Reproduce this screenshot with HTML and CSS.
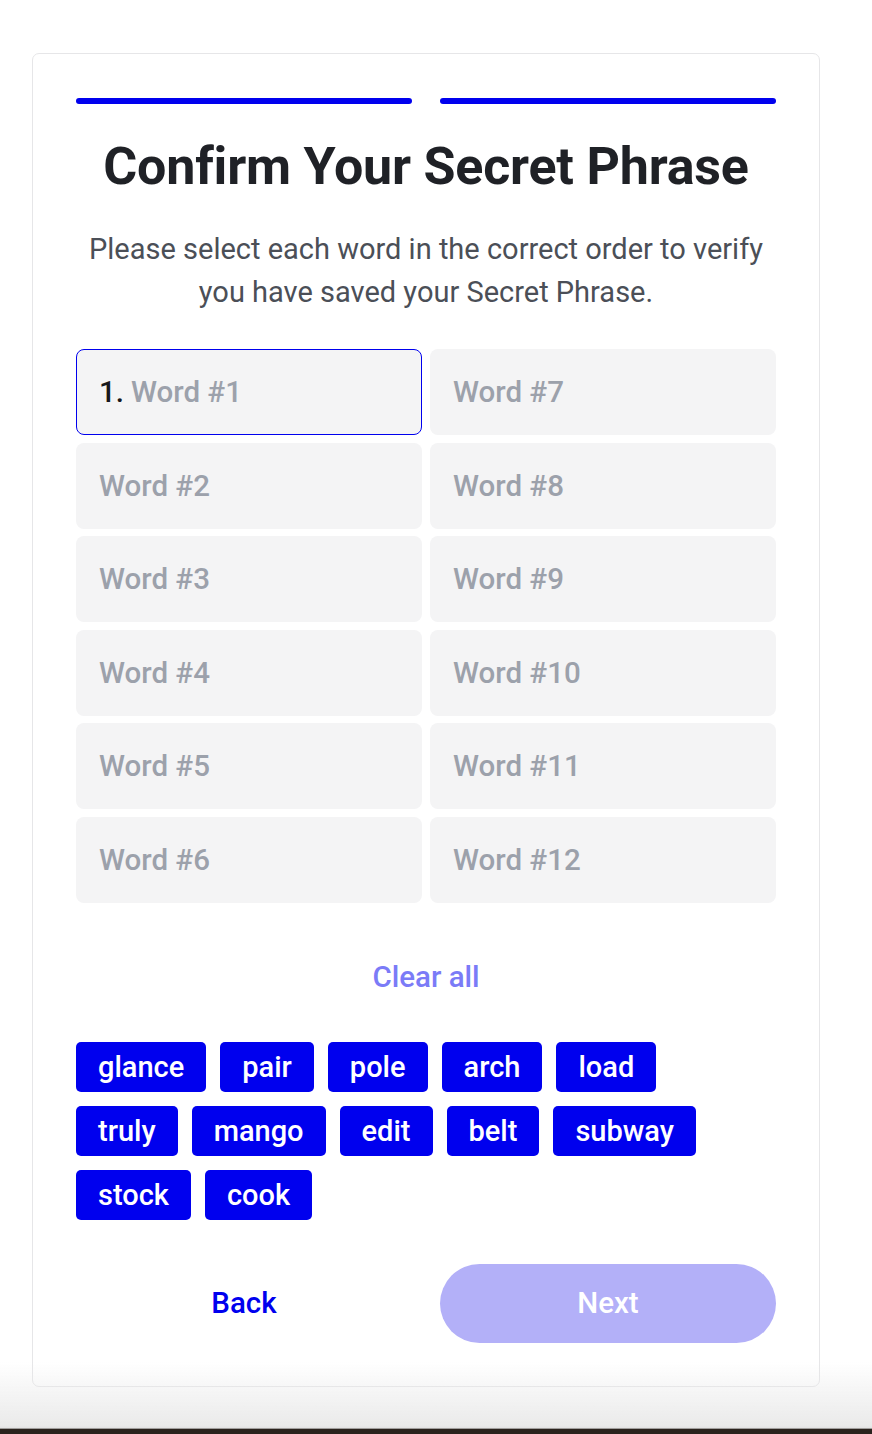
FILE: index.html
```html
<!DOCTYPE html>
<html lang="en">
<head>
<meta charset="utf-8">
<title>Confirm Your Secret Phrase</title>
<link rel="stylesheet" href="styles.css">
</head>
<body>
<main class="card">
  <div class="progress">
    <span class="step"></span>
    <span class="step"></span>
  </div>
  <h1 class="title">Confirm Your Secret Phrase</h1>
  <p class="subtitle">Please select each word in the correct order to verify you have saved your Secret Phrase.</p>
  <div class="slots">
    <div class="slot active"><span class="num">1.</span> Word #1</div>
    <div class="slot">Word #7</div>
    <div class="slot">Word #2</div>
    <div class="slot">Word #8</div>
    <div class="slot">Word #3</div>
    <div class="slot">Word #9</div>
    <div class="slot">Word #4</div>
    <div class="slot">Word #10</div>
    <div class="slot">Word #5</div>
    <div class="slot">Word #11</div>
    <div class="slot">Word #6</div>
    <div class="slot">Word #12</div>
  </div>
  <button class="clear">Clear all</button>
  <div class="chips">
    <button class="chip">glance</button>
    <button class="chip">pair</button>
    <button class="chip">pole</button>
    <button class="chip">arch</button>
    <button class="chip">load</button>
    <button class="chip">truly</button>
    <button class="chip">mango</button>
    <button class="chip">edit</button>
    <button class="chip">belt</button>
    <button class="chip">subway</button>
    <button class="chip">stock</button>
    <button class="chip">cook</button>
  </div>
  <div class="actions">
    <button class="back">Back</button>
    <button class="next">Next</button>
  </div>
</main>
<div class="window-bottom"></div>
</body>
</html>
```

FILE: styles.css
```css
* { box-sizing: border-box; }
html, body { margin: 0; padding: 0; }
body {
  background: #ffffff;
  font-family: Roboto, "Liberation Sans", sans-serif;
  width: 872px;
  height: 1434px;
  overflow: hidden;
  padding-top: 53px;
  padding-left: 32px;
}
.card {
  width: 788px;
  height: 1334px;
  border: 1px solid #e6e6e8;
  border-radius: 7px;
  padding: 44px 43px;
  display: flex;
  flex-direction: column;
}
.progress {
  display: flex;
  gap: 28px;
}
.step {
  flex: 1;
  height: 6px;
  border-radius: 3px;
  background: #0000ee;
}
.title {
  margin: 34px 0 0;
  font-size: 52px;
  line-height: 58px;
  font-weight: 700;
  color: #1f2126;
  text-align: center;
  letter-spacing: -0.2px;
}
.subtitle {
  margin: 32px auto 0;
  max-width: 700px;
  font-size: 29px;
  line-height: 43px;
  color: #4b4f57;
  text-align: center;
}
.slots {
  margin-top: 35px;
  display: grid;
  grid-template-columns: 1fr 1fr;
  grid-template-rows: repeat(6, 86px);
  gap: 7.6px 8px;
}
.slot {
  background: #f4f4f5;
  border-radius: 8px;
  border: 1px solid transparent;
  display: flex;
  align-items: center;
  padding-left: 22px;
  font-size: 29.5px;
  font-weight: 500;
  color: #9ca1ab;
}
.slot.active { border-color: #0000ee; }
.num { color: #17181b; margin-right: 7px; }
.clear {
  margin: 52px auto 0;
  background: none;
  border: 0;
  font-family: inherit;
  font-size: 29.5px;
  font-weight: 500;
  color: #7b7bf7;
  line-height: 44px;
  padding: 0;
}
.chips {
  margin-top: 43px;
  display: flex;
  flex-wrap: wrap;
  gap: 14px 14px;
  width: 640px;
}
.chip {
  height: 50px;
  padding: 0 22px;
  border: 0;
  border-radius: 5px;
  background: #0000ee;
  color: #ffffff;
  font-family: inherit;
  font-size: 29px;
  font-weight: 500;
}
.actions {
  margin-top: 44px;
  display: flex;
  gap: 28px;
}
.back, .next {
  flex: 1;
  height: 79px;
  border: 0;
  font-family: inherit;
  font-size: 29.5px;
  font-weight: 500;
}
.back { background: none; color: #0000ee; }
.next { background: #b3b0f8; color: #ffffff; border-radius: 40px; }
.window-bottom {
  position: fixed;
  left: 0;
  right: 0;
  bottom: 0;
  height: 72px;
  background: linear-gradient(to bottom, rgba(230,230,230,0) 0%, rgba(232,232,232,0.9) 88%, #e4e4e4 92%, #2a221d 93%, #2a221d 100%);
  pointer-events: none;
}
```
